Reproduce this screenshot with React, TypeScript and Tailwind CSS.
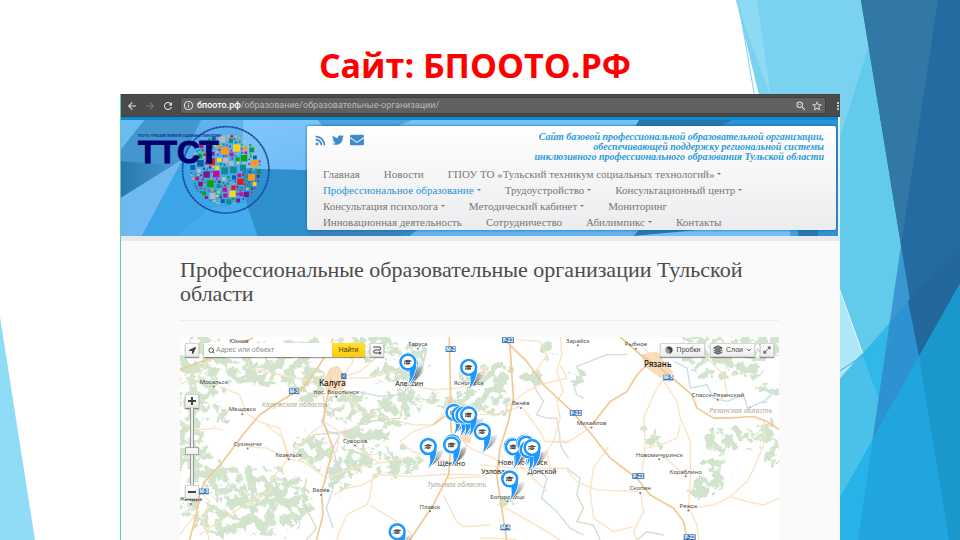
import { FaEnvelope, FaGraduationCap, FaLocationArrow, FaRss, FaTwitter } from 'react-icons/fa';
import {
  MdArrowBack,
  MdArrowForward,
  MdInfoOutline,
  MdMoreVert,
  MdRefresh,
  MdStarBorder,
  MdZoomOut,
} from 'react-icons/md';
import { ChevronDown, Layers, Maximize2, Search } from 'lucide-react';

type NavItem = { label: string; menu?: boolean; active?: boolean };

const navRows: NavItem[][] = [
  [
    { label: 'Главная' },
    { label: 'Новости' },
    { label: 'ГПОУ ТО «Тульский техникум социальных технологий»', menu: true },
  ],
  [
    { label: 'Профессиональное образование', menu: true, active: true },
    { label: 'Трудоустройство', menu: true },
    { label: 'Консультационный центр', menu: true },
  ],
  [
    { label: 'Консультация психолога', menu: true },
    { label: 'Методический кабинет', menu: true },
    { label: 'Мониторинг' },
  ],
  [
    { label: 'Инновационная деятельность' },
    { label: 'Сотрудничество' },
    { label: 'Абилимпикс', menu: true },
    { label: 'Контакты' },
  ],
];

// small repeatable generator, so the logo keeps its look between renders
function makeRandom(seed: number) {
  let s = seed;
  return () => {
    s = (s * 16807) % 2147483647;
    return s / 2147483647;
  };
}

const logoColors = ['#b9b9b9', '#0a5fa8', '#0aa50a', '#f01414', '#ff9a10', '#cc0a90', '#148a8a', '#7a1a8a', '#ffd21e', '#b9b9b9', '#149048'];

function makeTiles() {
  const rnd = makeRandom(4242);
  const tiles: { x: number; y: number; s: number; c: string }[] = [];
  for (let i = 0; i < 9000 && tiles.length < 300; i++) {
    const s = i < 40 ? 18 + rnd() * 4 : i < 500 ? 11 + rnd() * 5 : 4 + rnd() * 5;
    const a = rnd() * Math.PI * 2;
    const r = Math.sqrt(rnd()) * (108 - s / 2);
    const x = 267 + Math.cos(a) * r - s / 2;
    const y = 134 + Math.sin(a) * r - s / 2;
    const hit = tiles.some((t) => x < t.x + t.s + 2 && t.x < x + s + 2 && y < t.y + t.s + 2 && t.y < y + s + 2);
    if (!hit) tiles.push({ x, y, s, c: logoColors[Math.floor(rnd() * logoColors.length)] });
  }
  return tiles;
}

const tiles = makeTiles();

function Logo() {
  return (
    <svg viewBox="0 0 400 280" className="h-[93px] w-[133px]" role="img" aria-label="ТТСТ">
      <circle cx="267" cy="135" r="130" fill="none" stroke="#1c4fa3" strokeWidth="5" strokeDasharray="9 1" />
      {tiles.map((t, i) => (
        <rect key={i} x={t.x} y={t.y} width={t.s} height={t.s} fill={t.c} />
      ))}
      <text x="3" y="36" fontSize="8" fill="#10208a" fontFamily="Liberation Sans, sans-serif" fontWeight="700">
        ГПОУ ТО «ТУЛЬСКИЙ ТЕХНИКУМ СОЦИАЛЬНЫХ ТЕХНОЛОГИЙ»
      </text>
      <text x="3" y="114" fontSize="96" fill="#00006e" stroke="#00006e" strokeWidth="3" fontFamily="Liberation Sans, sans-serif" fontWeight="700">
        ТТСТ
      </text>
    </svg>
  );
}

function SlideBackground() {
  return (
    <svg viewBox="0 0 960 540" preserveAspectRatio="none" className="absolute inset-0 h-full w-full" aria-hidden="true">
      <path d="M0 317 35 540H0z" fill="#90dbf6" />
      <path d="M736 0H960V540H930z" fill="#62cbec" />
      <path d="M736 0H883L800 266z" fill="#7bd2f0" />
      <path d="M736 0H757L771 98z" fill="#8ed9f3" />
      <path d="M738 0 757 110" stroke="#7fd0ee" strokeWidth="1" />
      <path d="M800 179 862 353 840 380 800 420z" fill="#b0e6f7" />
      <path d="M960 243V540H820V402z" fill="#30b9e8" />
      <path d="M820 402 862 353 930 540H820z" fill="#4bc1ea" />
      <path d="M938 0H960V540H858L901 245z" fill="#3b97d2" />
      <path d="M960 243V540H858L890 322z" fill="#2c92d0" />
      <path d="M861 0H960V284L919 356 901 245z" fill="#246ba1" />
      <path d="M960 243V284L919 356 908 301z" fill="#23689c" />
      <path d="M861 0H938L901 245z" fill="#3178a7" />
      <path d="M960 284V540H820V533z" fill="#27b3e8" />
      <path d="M960 284V540H858L873 439z" fill="#21a5df" />
      <path d="M960 284V540H949L919 356z" fill="#1a98cc" />
      <path d="M838 372 890 338" stroke="#2eb2e4" strokeWidth="1" />
    </svg>
  );
}

function BrowserBar() {
  return (
    <div className="flex h-[23px] items-center gap-1.5 overflow-hidden border-y border-[#424040] bg-[#4c4b4b] pl-[5px] text-[#e4e4e4]">
      <button type="button" aria-label="Назад">
        <MdArrowBack size={12} />
      </button>
      <button type="button" aria-label="Вперёд" className="text-[#7b7b7b]">
        <MdArrowForward size={12} />
      </button>
      <button type="button" aria-label="Обновить">
        <MdRefresh size={12} />
      </button>
      <div className="flex h-[17px] min-w-0 flex-1 items-center rounded-xs border border-[#3f3f3f] bg-[#616161] pr-0.5 pl-0.5 font-['Roboto',sans-serif] text-[9px]">
        <MdInfoOutline size={11} className="mr-[3px] shrink-0" />
        <label htmlFor="address" className="font-medium text-white">
          бпоото.рф
        </label>
        <input
          id="address"
          type="text"
          defaultValue="/образование/образовательные-организации/"
          className="min-w-0 flex-1 bg-transparent text-[#b9b9b9] outline-none"
        />
        <button type="button" aria-label="Масштаб" className="mr-1">
          <MdZoomOut size={12} />
        </button>
        <button type="button" aria-label="В закладки">
          <MdStarBorder size={12} />
        </button>
      </div>
      <button type="button" aria-label="Меню" className="w-2 shrink-0">
        <MdMoreVert size={12} />
      </button>
    </div>
  );
}

function HeaderFacets() {
  return (
    <svg viewBox="0 0 720 118" preserveAspectRatio="none" className="absolute inset-0 h-full w-full" aria-hidden="true">
      <defs>
        <linearGradient id="hb" x1="0" y1="0" x2="0" y2="1">
          <stop offset="0" stopColor="#5fb0ec" />
          <stop offset="1" stopColor="#3ba2e6" />
        </linearGradient>
        <linearGradient id="hd" x1="0" y1="0" x2="1" y2="0">
          <stop offset="0" stopColor="#2a78ab" />
          <stop offset="1" stopColor="#4a9dd6" />
        </linearGradient>
        <linearGradient id="hl" x1="0" y1="0" x2="1" y2="1">
          <stop offset="0" stopColor="#82c6fa" />
          <stop offset="1" stopColor="#64b8f6" />
        </linearGradient>
        <linearGradient id="hm" x1="0" y1="0" x2="0" y2="1">
          <stop offset="0" stopColor="#64b3ee" />
          <stop offset="1" stopColor="#3aa6e9" />
        </linearGradient>
      </defs>
      <rect width="720" height="118" fill="url(#hb)" />
      <path d="M0 0H82L62 42 0 80z" fill="#4496cf" />
      <path d="M0 0H26L0 32z" fill="#6cbcf4" />
      <path d="M0 44 50 47 62 42 0 80z" fill="url(#hd)" />
      <path d="M0 80 62 42 21 118H0z" fill="#6eb9f2" />
      <path d="M82 0H123L126 85 62 42z" fill="url(#hm)" />
      <path d="M62 42 126 85 137 118H21z" fill="#3ba5e8" />
      <path d="M90 90 126 85 137 118H56z" fill="#42acee" />
      <path d="M123 0H310V56L121 51z" fill="url(#hl)" />
      <path d="M121 51 310 56V118H137L126 85z" fill="#2e90cd" />
      <path d="M195 0H300L270 12H205z" fill="#4ba3df" />
      <path d="M300 0H522L515 12H280z" fill="#74c2fa" />
      <path d="M522 0H720V118H680V12H515z" fill="#2878b0" />
      <path d="M620 0H720V118H700V10H600z" fill="#2e93d8" />
      <path d="M187 110H300L280 118H187z" fill="#2f86c0" />
      <path d="M300 110H520V118H290z" fill="#5db5f4" />
      <path d="M520 112H600L515 118z" fill="#2878b0" />
      <path d="M600 110H672V118H515z" fill="#72c0fa" />
      <path d="M0 0H720V3H0z" fill="#0b8bd0" />
    </svg>
  );
}

function SiteHeader() {
  return (
    <header className="relative flex border-r-2 border-[#e9f2f9] pr-0.5">
      <HeaderFacets />
      <div className="relative w-[26%] pt-2 pl-4">
        <Logo />
      </div>
      <div className="relative mt-[9px] mb-1.5 flex-1 rounded-xs bg-linear-to-b from-white to-[#ececee] pr-3 pl-2 shadow-[0_0_3px_#1b5f92]">
        <div className="flex h-10 justify-between pt-1.5">
          <div className="flex h-4 items-center gap-1.5 text-[#428bca]">
            <a href="#rss" aria-label="RSS">
              <FaRss size={11} />
            </a>
            <a href="#twitter" aria-label="Twitter">
              <FaTwitter size={12} />
            </a>
            <a href="#mail" aria-label="Почта">
              <FaEnvelope size={14} />
            </a>
          </div>
          <p className="text-right text-[10px] leading-[10px] font-bold text-[#2b9ad8] italic">
            Сайт базовой профессиональной образовательной организации,
            <br />
            обеспечивающей поддержку региональной системы
            <br />
            инклюзивного профессионального образования Тульской области
          </p>
        </div>
        <nav className="pl-2 text-[11px] leading-4 whitespace-nowrap text-[#777]">
          {navRows.map((row, i) => (
            <ul key={i} className="flex gap-6">
              {row.map((item) => (
                <li key={item.label}>
                  <a href="#nav" className={item.active ? 'flex items-center text-[#1e96d8]' : 'flex items-center'}>
                    {item.label}
                    {item.menu && (
                      <span className="ml-[3px] border-x-2 border-t-2 border-x-transparent border-t-current" />
                    )}
                  </a>
                </li>
              ))}
            </ul>
          ))}
        </nav>
      </div>
    </header>
  );
}

// map drawing: 3 units per pixel
const forests: [number, number, number, number][] = [
  [30, 60, 90, 60], [120, 90, 90, 50], [60, 120, 90, 60], [240, 110, 90, 40], [330, 90, 60, 50],
  [30, 220, 50, 60], [110, 235, 40, 26], [20, 350, 50, 90], [70, 400, 40, 40], [330, 30, 120, 16],
  [390, 150, 50, 50], [500, 215, 60, 34], [590, 240, 80, 30], [660, 210, 60, 40], [640, 120, 60, 22],
  [400, 345, 48, 50], [530, 370, 50, 30], [560, 300, 70, 20], [480, 420, 30, 50], [180, 450, 90, 50],
  [270, 460, 60, 60], [330, 500, 60, 70], [200, 540, 80, 50], [110, 560, 50, 40], [260, 570, 60, 30],
  [40, 520, 40, 20], [600, 55, 60, 20], [560, 20, 90, 14], [660, 380, 60, 30], [620, 400, 40, 18],
  [780, 200, 60, 20], [860, 190, 60, 16], [700, 60, 30, 40], [880, 120, 30, 30], [940, 170, 46, 40],
  [960, 120, 30, 30], [925, 215, 50, 16], [1055, 130, 22, 16], [1190, 125, 20, 16], [1105, 40, 12, 16],
  [1560, 40, 70, 30], [1680, 40, 110, 30], [1620, 90, 80, 30], [1760, 25, 50, 22], [1700, 110, 50, 14],
  [1415, 305, 20, 20], [1630, 315, 46, 34], [1710, 315, 20, 24], [1765, 290, 24, 36], [1775, 350, 20, 36],
  [1600, 430, 40, 24], [1565, 470, 26, 18], [1760, 170, 20, 14], [1600, 385, 14, 12], [980, 500, 14, 20],
];

const minorRoads = [
  'M0 150 60 120 110 40 190 20', 'M0 265 60 285 100 280 130 285', 'M60 470 90 500 70 560 90 615',
  'M120 155 180 180 200 235 240 262 300 280 325 370', 'M203 335 260 340 325 372 370 380 440 430 520 400 600 385 690 365',
  'M325 372 280 430 270 470 180 520 60 600', 'M330 370 310 310 260 270', 'M200 60 210 100 300 120 400 140',
  'M420 160 440 220 430 270 400 290 340 350', 'M440 170 500 180 540 230 620 250 700 270 760 270',
  'M432 260 480 290 520 330 600 385', 'M460 130 560 130 650 110 700 80', 'M600 60 540 110 480 130',
  'M480 0 520 80 480 140', 'M690 150 760 165 840 160 930 110 900 100', 'M580 418 700 425 790 418 900 420',
  'M580 418 570 490 560 510 500 540 470 615', 'M570 510 650 560 700 600', 'M790 480 830 560 850 575 930 570',
  'M660 320 700 290 760 270', 'M660 320 700 350 800 380', 'M760 268 790 240 810 180', 'M800 430 900 425 960 400',
  'M830 300 870 340 940 370 960 380', 'M900 390 1000 400 1100 400 1160 400', 'M1140 0 1145 60 1130 110 1150 170 1130 200 1140 250 1120 320 1100 350 1110 400',
  'M980 215 1040 170 1080 150 1160 130 1140 90', 'M1025 215 1080 290 1095 320 1165 320', 'M1095 320 1160 324 1235 275',
  'M1100 470 1060 430 1020 390', 'M1160 405 1190 440 1250 465 1380 470', 'M1285 335 1240 400 1230 470 1240 550 1300 590 1360 575',
  'M1380 470 1390 530 1360 590 1370 615', 'M1385 420 1395 330 1390 250 1420 180 1450 130', 'M1400 340 1440 330 1490 310 1500 270',
  'M1445 360 1490 400 1520 420', 'M1445 130 1490 200 1500 250 1530 320 1530 430 1525 520', 'M1525 520 1600 510 1650 485 1700 500 1750 510 1797 490',
  'M1650 485 1700 440 1720 400 1750 330 1750 260', 'M1525 520 1550 570 1555 615', 'M1580 70 1630 120 1640 180 1610 200', 'M1060 120 1100 60 1080 20 1010 15',
  'M960 510 1050 560 1100 590 1140 615', 'M900 610 960 610 1010 615', 'M1380 30 1420 70',
  'M480 290 470 350 440 400 435 450', 'M0 600 30 560 60 530', 'M900 240 960 235 1020 215', 'M460 480 500 460 550 450 600 420',
];

const majorRoads = [
  'M0 105 80 75 150 40 220 10', 'M30 615 50 540 60 480 75 440 130 380 190 300 240 240 300 200 370 160 420 90 450 40 460 10',
  'M425 470 440 420 460 340 430 260 440 200 455 130', 'M425 470 430 540 410 615', 'M808 7 812 190 800 240 760 270',
  'M808 200 815 300 806 420 760 510 690 615', 'M988 7 1000 190 985 260 960 340 950 420 965 520 980 615',
  'M965 7 1040 80 1090 150 1180 235 1235 300 1290 370 1370 430 1410 480 1480 520 1510 560 1520 615',
  'M1235 270 1290 200 1340 170 1370 120 1410 80', 'M1320 7 1380 60 1440 100 1500 150 1535 180 1550 220 1600 250 1640 250 1720 245 1760 260 1797 285',
];

const rivers = [
  'M430 180 440 230 425 260 445 290 480 300 460 340 470 380 450 420 460 460 440 520 460 580',
  'M530 170 600 185 660 180 700 150 730 90 740 40', 'M1480 80 1520 100 1530 160 1580 150 1600 190 1640 200 1690 180 1700 220 1750 200 1797 160',
  'M1138 310 1145 340 1165 370', 'M1075 400 1100 430 1085 490 1130 530 1170 580 1210 600',
];

const borders = [
  'M740 50 715 110 680 150 660 250 560 260 500 290 400 300 420 340 450 370',
  'M380 430 370 500 390 540 410 580 380 615', 'M1340 60 1280 60 1190 95 1210 140 1180 150 1190 180 1210 190',
  'M1055 130 1070 170 1090 200 1070 240 1100 250 1130 250 1140 310', 'M1160 400 1200 430 1190 480 1210 520 1190 560 1240 570 1260 615',
  'M1370 615 1400 590 1450 600',
];

const places: { name: string; x: number; y: number; big?: boolean }[] = [
  { name: 'Юхнов', x: 178, y: 24 }, { name: 'Мосальск', x: 103, y: 147 }, { name: 'Мещовск', x: 188, y: 230 },
  { name: 'пос. Воротынск', x: 470, y: 178 }, { name: 'Сухиничи', x: 204, y: 333 }, { name: 'Козельск', x: 327, y: 365 },
  { name: 'Суворов', x: 526, y: 324 }, { name: 'Белёв', x: 424, y: 472 }, { name: 'Жиздра', x: 34, y: 499 },
  { name: 'Таруса', x: 714, y: 34 }, { name: 'Ясногорск', x: 866, y: 152 }, { name: 'Плавск', x: 750, y: 521 },
  { name: 'Венёв', x: 1022, y: 212 }, { name: 'Зарайск', x: 1193, y: 24 }, { name: 'Рыбное', x: 1367, y: 34 },
  { name: 'Спасск-Рязанский', x: 1612, y: 187 }, { name: 'Михайлов', x: 1234, y: 270 }, { name: 'Новомичуринск', x: 1437, y: 365 },
  { name: 'Кораблино', x: 1516, y: 416 }, { name: 'Скопин', x: 1380, y: 466 }, { name: 'Ряжск', x: 1524, y: 519 },
  { name: 'Богородицк', x: 982, y: 491 }, { name: 'Алексин', x: 688, y: 155, big: true }, { name: 'Щёкино', x: 814, y: 394, big: true },
  { name: 'Новомосковск', x: 1028, y: 389, big: true }, { name: 'Узловая', x: 945, y: 418, big: true }, { name: 'Донской', x: 1086, y: 417, big: true },
];

const badges: [string, number, number][] = [
  ['М-3', 343, 169], ['М-3', 73, 469], ['М-2', 812, 43], ['Р-22', 984, 16], ['Р-22', 1187, 234],
  ['М-5', 1464, 128], ['Р-22', 1374, 423], ['М-4', 976, 577], ['Р-22', 1528, 606],
];

const pins: [number, number][] = [
  [688, 86], [684, 82], [866, 98], [822, 233], [840, 240], [852, 241], [866, 240], [907, 290], [817, 324], [815, 330],
  [745, 335], [997, 334], [1000, 336], [1034, 325], [1038, 328], [1044, 344], [1056, 338], [989, 432], [652, 590],
];

function Pin({ x, y }: { x: number; y: number }) {
  return (
    <g transform={`translate(${x} ${y})`}>
      <path d="M0 62 26 16 44 8Q48 30 14 54z" fill="url(#pinShadow)" />
      <path d="M0 66C11 42 5 38 8 24L25 8C24 34 14 50 0 66z" fill="#1e98ff" stroke="#fff" strokeWidth="5" />
      <circle r="28" fill="#fff" />
      <circle r="22" fill="#fff" stroke="#1e98ff" strokeWidth="8" />
      <path d="M0 66C11 42 3 38 6 22L25 8C24 32 14 50 0 66z" fill="#1e98ff" />
      <circle r="18" fill="#fff" />
      <FaGraduationCap x={-12} y={-12} size={24} color="#505050" />
    </g>
  );
}

function MapDrawing() {
  return (
    <svg viewBox="0 7 1797 608" preserveAspectRatio="xMidYMin slice" className="absolute inset-0 h-full w-full bg-white">
      <defs>
        <filter id="woods" x="0" y="7" width="1797" height="608" filterUnits="userSpaceOnUse" colorInterpolationFilters="sRGB">
          <feTurbulence type="fractalNoise" baseFrequency="0.035" numOctaves="4" seed="8" result="n" />
          <feDisplacementMap in="SourceGraphic" in2="n" scale="70" xChannelSelector="R" yChannelSelector="G" result="d" />
          <feColorMatrix in="n" type="matrix" values="0 0 0 0 0 0 0 0 0 0 0 0 0 0 0 0 0 14 0 -6" result="t" />
          <feComposite in="d" in2="t" operator="in" />
        </filter>
        <linearGradient id="pinShadow" x1="0" y1="1" x2="1" y2="0">
          <stop offset="0" stopColor="#333" stopOpacity="0.9" />
          <stop offset="1" stopColor="#777" stopOpacity="0.1" />
        </linearGradient>
      </defs>
      <g filter="url(#woods)" fill="#d3e4cd">
        {forests.map(([cx, cy, rx, ry], i) => (
          <ellipse key={i} cx={cx} cy={cy} rx={rx + 8} ry={ry + 6} />
        ))}
      </g>
      <g fill="#f9dcb9">
        <path d="M450 100 475 92 500 130 490 165 440 170 430 140z" />
        <path d="M1380 60 1430 50 1460 90 1480 115 1440 130 1400 100z" />
        <path d="M840 285 880 290 870 325 845 320z" />
      </g>
      <g fill="none" strokeLinejoin="round">
        <path d={rivers.join('')} stroke="#c6deec" strokeWidth="4" />
        <path d={borders.join('')} stroke="#dadaca" strokeWidth="4" />
        <path d={minorRoads.join('')} stroke="#fae3c4" strokeWidth="4" />
        <path d={majorRoads.join('')} stroke="#f2c894" strokeWidth="5" />
      </g>
      <g fontFamily="Noto Sans, sans-serif" textAnchor="middle">
        <g fontSize="21" fontStyle="italic" fill="#aea98a">
          <text x="345" y="216">Калужская область</text>
          <text x="830" y="455">Тульская область</text>
          <text x="1681" y="235">Рязанская область</text>
        </g>
        {places.map((p) => (
          <g key={p.name}>
            {!p.big && <circle cx={p.x} cy={p.y + 8} r="3" fill="#777" />}
            <text x={p.x} y={p.y} fontSize={p.big ? 21 : 18} fill={p.big ? '#222' : '#4c4c4c'}>
              {p.name}
            </text>
          </g>
        ))}
        <g fontSize="24" fontWeight="500" fill="#111">
          <text x="458" y="154">Калуга</text>
          <text x="1432" y="96">Рязань</text>
        </g>
        <rect x="484" y="116" width="16" height="17" fill="#3e78b8" />
        <path d="M488 128 496 120M489 121 495 128" stroke="#fff" strokeWidth="2" />
        {badges.map(([name, x, y], i) => (
          <g key={i}>
            <rect x={x - (name.length > 3 ? 18 : 15)} y={y - 8} width={name.length > 3 ? 36 : 30} height="17" fill="#3e78b8" />
            <text x={x} y={y + 6} fontSize="15" fontWeight="700" fill="#fff">
              {name}
            </text>
          </g>
        ))}
      </g>
      {pins.map(([x, y], i) => (
        <Pin key={i} x={x} y={y} />
      ))}
    </svg>
  );
}

const mapButton =
  'flex h-3.5 items-center justify-center border border-[#d5d5d5] bg-linear-to-b from-white to-[#ececec] text-[#444] shadow-[0_1px_1px_#0006]';

function MapPanel() {
  return (
    <section className="relative min-h-[203px] flex-1 overflow-hidden">
      <MapDrawing />
      <div className="absolute inset-x-[5px] top-1.5 flex gap-[5px] font-['Liberation_Sans',sans-serif] text-[7px]">
        <button type="button" aria-label="Моё местоположение" className={`w-3.5 ${mapButton}`}>
          <FaLocationArrow size={7} />
        </button>
        <form className="flex h-3.5 w-[161px] shadow-[0_1px_1px_#0006]" onSubmit={(e) => e.preventDefault()}>
          <label htmlFor="place" className="flex w-3 items-center justify-center bg-white pl-0.5 text-[#444]">
            <Search size={7} strokeWidth={3} aria-label="Поиск" />
          </label>
          <input
            id="place"
            type="text"
            placeholder="Адрес или объект"
            className="min-w-0 flex-1 bg-white text-[7px] outline-none placeholder:text-[#8c8c8c]"
          />
          <button type="submit" className="w-[33px] bg-linear-to-b from-[#ffe02e] to-[#fccc0a] text-[#4a3d10]">
            Найти
          </button>
        </form>
        <button type="button" aria-label="Маршрут" className={`w-3.5 ${mapButton}`}>
          <svg viewBox="0 0 24 24" className="size-2.5" fill="none" stroke="currentColor" strokeWidth="2.5">
            <path d="M3 5H17A3.5 3.5 0 0 1 17 12H8A3.5 3.5 0 0 0 8 19H21M18 16 21 19 18 22" />
          </svg>
        </button>
        <button type="button" className={`ml-auto w-[45px] gap-1 ${mapButton}`}>
          <svg viewBox="0 0 24 24" className="size-2">
            <circle cx="12" cy="12" r="11" fill="#999" />
            <path d="M4 6A11 11 0 0 1 23 12Q22 20 14 23Q18 10 4 6z" fill="#444" />
          </svg>
          Пробки
        </button>
        <button type="button" className={`w-[45px] gap-[3px] ${mapButton}`}>
          <Layers size={10} strokeWidth={2} fill="#888" />
          Слои
          <ChevronDown size={6} strokeWidth={4} />
        </button>
        <button type="button" aria-label="На весь экран" className={`w-3.5 ${mapButton}`}>
          <Maximize2 size={8} strokeWidth={3} />
        </button>
      </div>
      <div className="absolute top-[57px] left-[5px] flex flex-col items-center">
        <button type="button" aria-label="Приблизить" className={`w-3.5 ${mapButton}`}>
          <span className="absolute h-0.5 w-2 bg-[#444]" />
          <span className="absolute h-2 w-0.5 bg-[#444]" />
        </button>
        <input
          type="range"
          aria-label="Масштаб карты"
          min={0}
          max={100}
          defaultValue={44}
          className="h-[77px] w-3.5 appearance-none bg-[linear-gradient(90deg,#0000_5px,#9a9a9a_5px,#9a9a9a_6px,#eee_6px,#eee_8px,#9a9a9a_8px,#9a9a9a_9px,#0000_9px)] [direction:rtl] [writing-mode:vertical-lr] [&::-webkit-slider-thumb]:h-2 [&::-webkit-slider-thumb]:w-3.5 [&::-webkit-slider-thumb]:appearance-none [&::-webkit-slider-thumb]:border [&::-webkit-slider-thumb]:border-[#aaa] [&::-webkit-slider-thumb]:bg-[#f4f4f4]"
        />
        <button type="button" aria-label="Отдалить" className={`w-3.5 ${mapButton}`}>
          <span className="h-0.5 w-2 bg-[#444]" />
        </button>
      </div>
    </section>
  );
}

export default function App() {
  return (
    <div className="relative flex h-screen min-h-[540px] flex-col overflow-hidden bg-white">
      <SlideBackground />
      <h1 className="relative pt-10 pr-2.5 pb-1 text-center font-['Open_Sans',sans-serif] text-[34px] leading-[50px] font-bold text-[#ff0000]">
        Сайт: БПООТО.РФ
      </h1>
      <div className="relative mx-auto flex w-3/4 flex-1 flex-col overflow-hidden border-l border-[#55d3a3] bg-[#fafafa] font-['Liberation_Serif',serif]">
        <BrowserBar />
        <SiteHeader />
        <main className="flex flex-1 flex-col border-t-[5px] border-[#e9e9ed] pt-[17px] pr-[61px] pl-[59px]">
          <h2 className="text-[22px] leading-6 text-[#4c4c4c]">
            Профессиональные образовательные организации Тульской области
          </h2>
          <hr className="mt-3.5 mb-4 border-[#eee]" />
          <MapPanel />
        </main>
      </div>
    </div>
  );
}
